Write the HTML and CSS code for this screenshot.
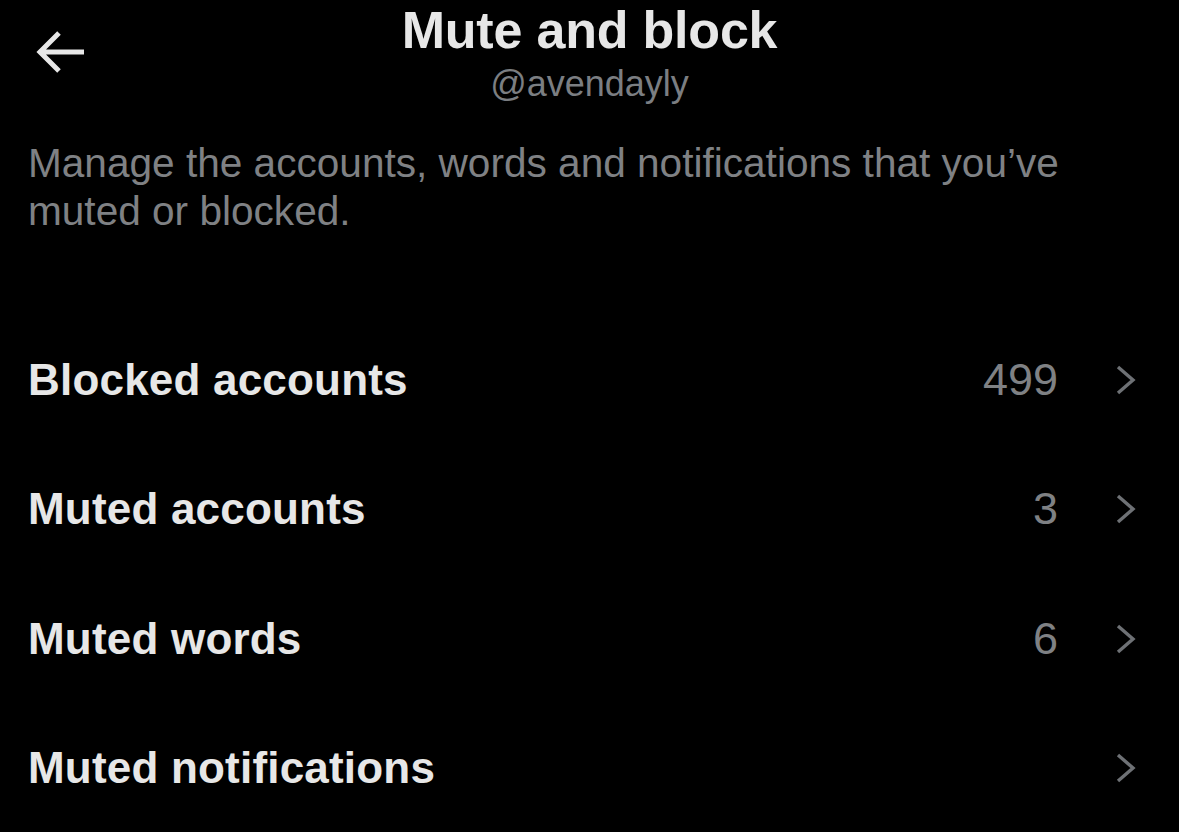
FILE: index.html
```html
<!DOCTYPE html>
<html lang="en">
<head>
<meta charset="utf-8">
<title>Mute and block</title>
<link rel="stylesheet" href="styles.css">
</head>
<body>
<div class="page">
  <header class="header">
    <div class="back">
      <svg class="back-icon" viewBox="0 0 50 44" width="50" height="44" aria-hidden="true">
        <path d="M49 22H5M24 3L5 22L24 41" fill="none" stroke="#e7e7e7" stroke-width="5" stroke-linecap="butt" stroke-linejoin="miter"/>
      </svg>
    </div>
    <div class="titles">
      <h1 class="title">Mute and block</h1>
      <div class="handle">@avendayly</div>
    </div>
    <div></div>
  </header>
  <p class="desc">Manage the accounts, words and notifications that you’ve muted or blocked.</p>
  <ul class="list">
    <li class="row"><span class="label">Blocked accounts</span><span class="count">499</span><svg class="chev" viewBox="0 0 22 30" width="22" height="30" aria-hidden="true"><path d="M3 2L18 15L3 28" fill="none" stroke="#6e7175" stroke-width="3.4"/></svg></li>
    <li class="row"><span class="label">Muted accounts</span><span class="count">3</span><svg class="chev" viewBox="0 0 22 30" width="22" height="30" aria-hidden="true"><path d="M3 2L18 15L3 28" fill="none" stroke="#6e7175" stroke-width="3.4"/></svg></li>
    <li class="row"><span class="label">Muted words</span><span class="count">6</span><svg class="chev" viewBox="0 0 22 30" width="22" height="30" aria-hidden="true"><path d="M3 2L18 15L3 28" fill="none" stroke="#6e7175" stroke-width="3.4"/></svg></li>
    <li class="row"><span class="label">Muted notifications</span><span class="count"></span><svg class="chev" viewBox="0 0 22 30" width="22" height="30" aria-hidden="true"><path d="M3 2L18 15L3 28" fill="none" stroke="#6e7175" stroke-width="3.4"/></svg></li>
  </ul>
</div>
</body>
</html>
```

FILE: styles.css
```css
html, body {
  margin: 0;
  padding: 0;
  background: #000;
}
body {
  font-family: "Liberation Sans", Arial, sans-serif;
  color: #e7e7e7;
  width: 1179px;
  height: 832px;
  overflow: hidden;
}
.page {
  display: flex;
  flex-direction: column;
}
.header {
  display: grid;
  grid-template-columns: 1fr auto 1fr;
  height: 139px;
}
.back {
  padding-left: 35px;
  padding-top: 30px;
}
.back-icon {
  display: block;
}
.titles {
  text-align: center;
}
.title {
  margin: 0;
  font-size: 52px;
  line-height: 60px;
  font-weight: 700;
  color: #e7e7e7;
  letter-spacing: -0.2px;
}
.handle {
  margin-top: 2px;
  font-size: 36px;
  line-height: 44px;
  color: #7b7e82;
}
.desc {
  margin: 0;
  padding: 0 28px;
  font-size: 40.6px;
  line-height: 48px;
  color: #7f8184;
  height: 176px;
}
.list {
  list-style: none;
  margin: 0;
  padding: 0;
}
.row {
  display: flex;
  align-items: center;
  height: 129.5px;
  padding: 0 42px 0 28px;
}
.label {
  flex: 1;
  font-size: 44px;
  font-weight: 700;
  color: #e7e7e7;
  letter-spacing: 0.2px;
}
.count {
  font-size: 45px;
  color: #7f8184;
  margin-right: 57px;
}
.chev {
  display: block;
}
```
